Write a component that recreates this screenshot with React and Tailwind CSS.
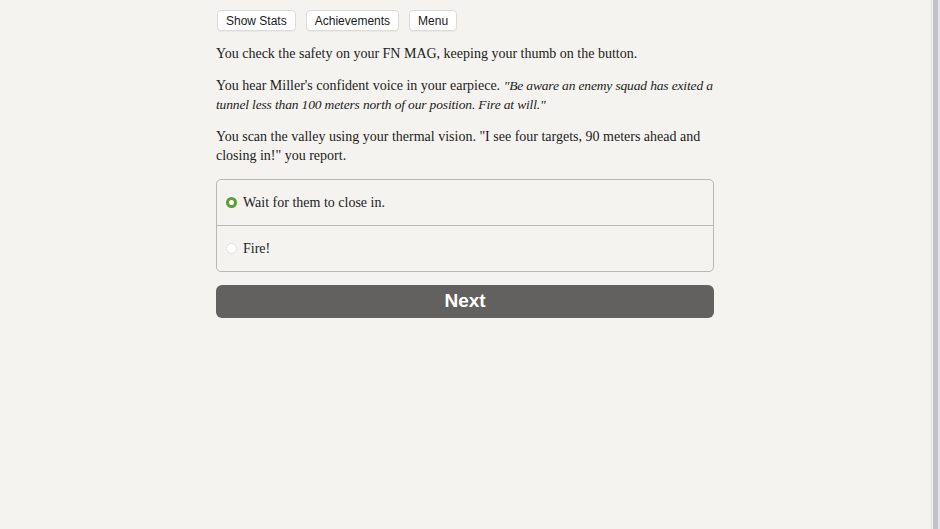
import { useState } from "react";

const serif = "font-['Palatino_Linotype','Book_Antiqua','Liberation_Serif',serif]";
const sans = "font-['Liberation_Sans',Arial,sans-serif]";

const choices = ["Wait for them to close in.", "Fire!"];

function TopButton({ children }) {
  return (
    <button className={`h-[21px] px-[8px] pt-[1px] bg-white border border-[#dcdbd6] rounded-[4px] text-[12px] text-[#1a1a1a] leading-none shadow-[0_1px_1px_rgba(0,0,0,0.04)] ${sans}`}>
      {children}
    </button>
  );
}

function Radio({ checked }) {
  return checked ? (
    <span className="w-[11px] h-[11px] rounded-full bg-[#5b9e3b] flex items-center justify-center flex-shrink-0">
      <span className="w-[5px] h-[5px] rounded-full bg-white" />
    </span>
  ) : (
    <span className="w-[11px] h-[11px] rounded-full bg-white border border-[#e2e1dc] flex-shrink-0" />
  );
}

export default function App() {
  const [picked, setPicked] = useState(0);

  return (
    <div className="flex w-[940px] h-[529px] bg-[#f4f3ef] overflow-hidden">
      {/* Story column */}
      <main className="flex-1 flex justify-center">
        <div className="w-[498px] pt-[10px]">
          <div className="flex gap-[10px] pl-[1px]">
            <TopButton>Show Stats</TopButton>
            <TopButton>Achievements</TopButton>
            <TopButton>Menu</TopButton>
          </div>

          <div className={`mt-[13px] text-[14px] leading-[19.5px] text-[#1c1c1c] space-y-[12px] ${serif}`}>
            <p>You check the safety on your FN MAG, keeping your thumb on the button.</p>
            <p>
              You hear Miller's confident voice in your earpiece.{" "}
              <i className="text-[13.5px] tracking-[-0.15px]">
                "Be aware an enemy squad has exited a tunnel less than 100 meters north of our
                position. Fire at will."
              </i>
            </p>
            <p>
              You scan the valley using your thermal vision. "I see four targets, 90 meters ahead
              and closing in!" you report.
            </p>
          </div>

          <div className="mt-[13px] border border-[#b9b8b4] rounded-[5px] overflow-hidden">
            {choices.map((c, i) => (
              <label
                key={c}
                onClick={() => setPicked(i)}
                className={`flex items-center gap-[6px] pl-[9px] cursor-pointer ${i > 0 ? "h-[46px] border-t border-[#b9b8b4]" : "h-[45px]"}`}
              >
                <Radio checked={picked === i} />
                <span className={`text-[14px] text-[#1c1c1c] ${serif}`}>{c}</span>
              </label>
            ))}
          </div>

          <button className={`mt-[13px] w-full h-[33px] rounded-[6px] bg-[#626160] text-white text-[19px] font-bold ${sans}`}>
            Next
          </button>
        </div>
      </main>

      {/* Scrollbar strip */}
      <div className="w-[10px] flex">
        <div className="w-[1px] bg-[#f4f3ef]" />
        <div className="w-[1px] bg-[#e3e3dd]" />
        <div className="w-[1px] bg-[#f4f3ef]" />
        <div className="w-[5px] bg-[#c2c1c6]" />
        <div className="w-[2px] bg-[#e6e5ea]" />
      </div>
    </div>
  );
}
